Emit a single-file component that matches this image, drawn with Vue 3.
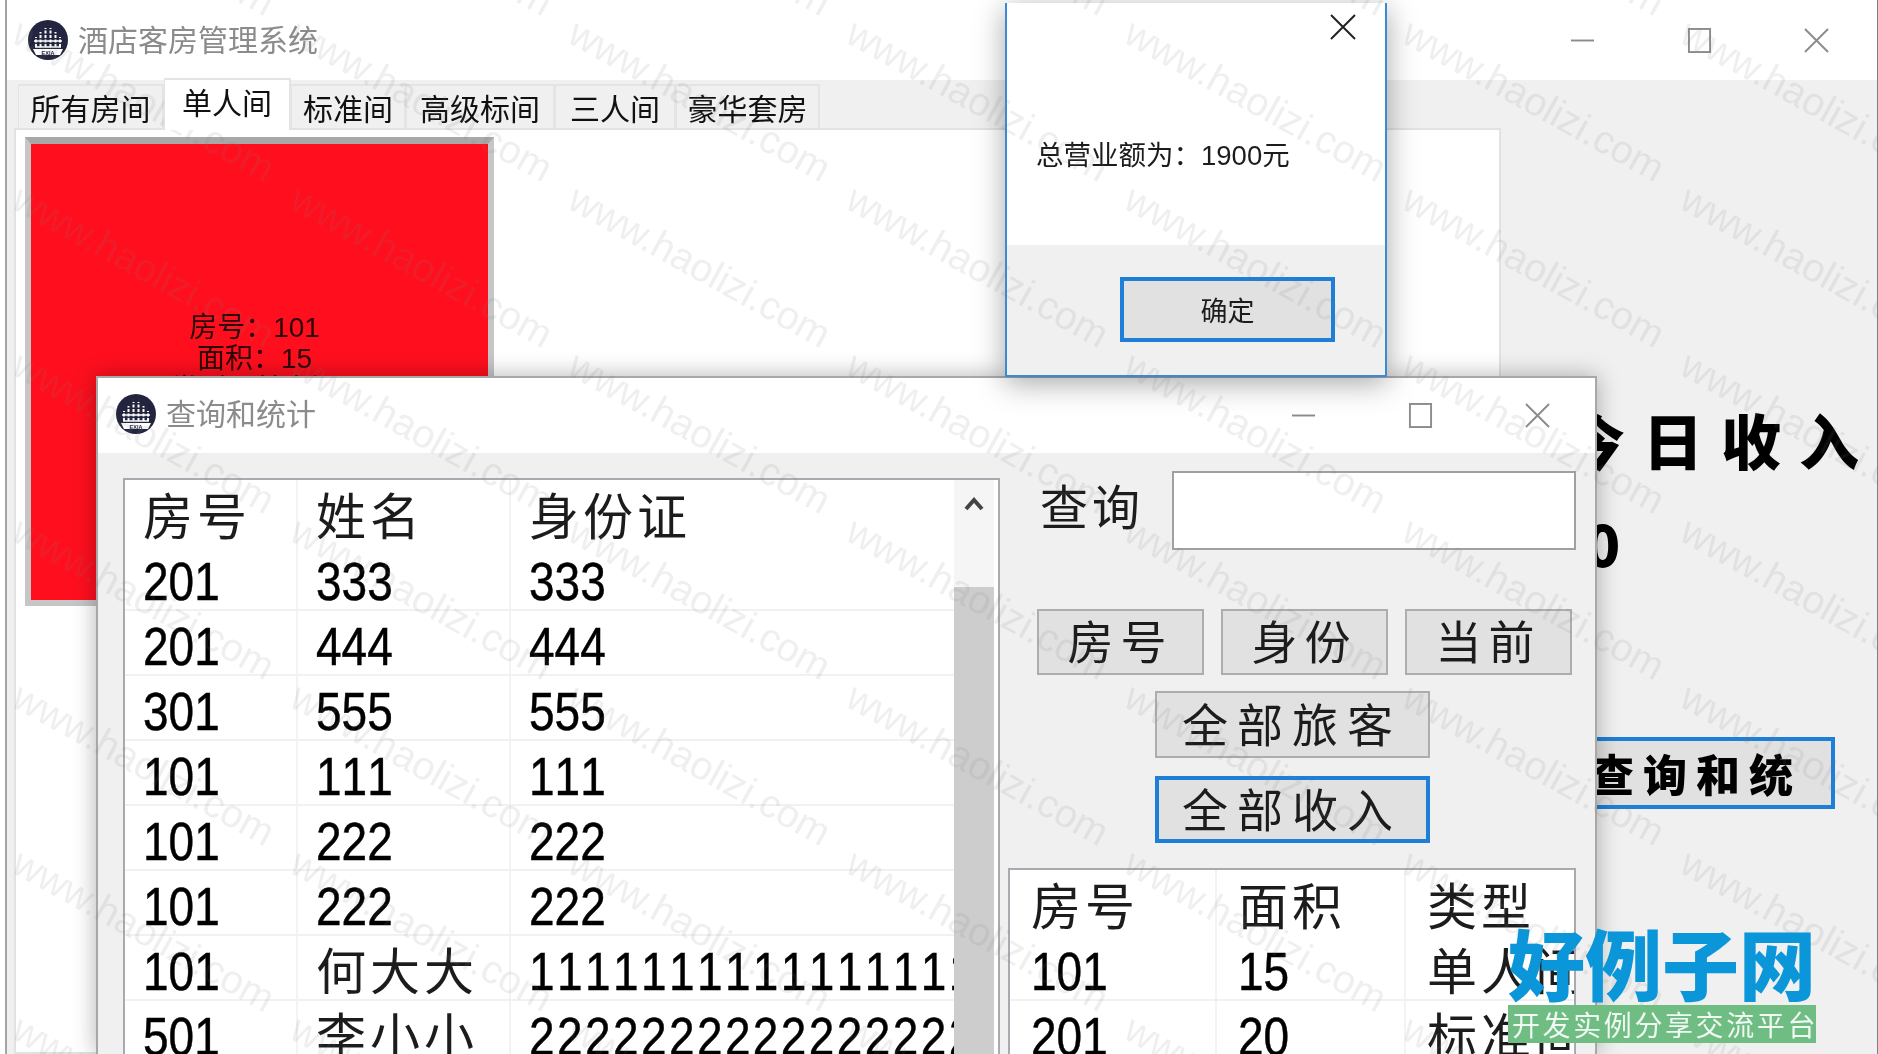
<template>
  <div class="desk">
    <svg class="defs" width="0" height="0">
      <symbol id="app-logo" viewBox="0 0 40 40">
        <circle cx="20" cy="20" r="20" fill="#23253f" />
        <g stroke="#fff" stroke-width="2" stroke-dasharray="3 1.5">
          <path d="M8 27V17M12.500 27V12M17.500 27V8M22.500 27V8M27.500 27V12M32 27V17" />
        </g>
        <path d="M6 21H34M7 27H33" stroke="#fff" stroke-width="1.500" />
        <path d="M5 29H35L32 35H8Z" fill="#fff" />
        <text x="20" y="34.500" text-anchor="middle" class="logo-text">EXIA</text>
      </symbol>
    </svg>

    <!-- 主窗口 -->
    <div class="window main-win">
      <div class="titlebar main-title">
        <svg class="logo"><use href="#app-logo" /></svg>
        <span class="title-text">酒店客房管理系统</span>
        <div class="controls">
          <svg class="ctl" viewBox="0 0 26 26"><path d="M1 13H25" /></svg>
          <svg class="ctl" viewBox="0 0 26 26"><rect x="2" y="1" width="22" height="24" /></svg>
          <svg class="ctl" viewBox="0 0 26 26"><path d="M1 1L25 25M25 1L1 25" /></svg>
        </div>
      </div>
      <div class="main-body">
        <div class="tabs">
          <div class="tab-strip">
            <div
              v-for="t in tabs"
              :key="t.name"
              class="tab"
              :class="{ active: t.name === activeTab }"
              :style="{ width: t.w + 'px' }"
            >{{ t.name }}</div>
          </div>
          <div class="tab-page">
            <div class="room-card">
              <div class="room-red">
                <div>房号：101</div>
                <div>面积：15</div>
                <div>类型：单人间</div>
              </div>
            </div>
          </div>
        </div>
        <div class="side">
          <div class="income-label">今日收入</div>
          <div class="income-value">0</div>
          <button class="stat-btn">查询和统</button>
        </div>
      </div>
    </div>

    <!-- 查询和统计 -->
    <div class="window query-win">
      <div class="titlebar query-title">
        <svg class="logo"><use href="#app-logo" /></svg>
        <span class="title-text">查询和统计</span>
        <div class="controls">
          <svg class="ctl" viewBox="0 0 26 26"><path d="M1 13H25" /></svg>
          <svg class="ctl" viewBox="0 0 26 26"><rect x="2" y="1" width="22" height="24" /></svg>
          <svg class="ctl" viewBox="0 0 26 26"><path d="M1 1L25 25M25 1L1 25" /></svg>
        </div>
      </div>
      <div class="query-body">
        <div class="list guests">
          <div class="list-rows">
            <div class="list-row list-head">
              <div v-for="h in guestHead" :key="h" class="cell head-cell">{{ h }}</div>
            </div>
            <div v-for="(r, i) in guests" :key="i" class="list-row">
              <div v-for="(c, j) in r" :key="j" class="cell">
                <span :class="cellClass(c)">{{ c }}</span>
              </div>
            </div>
          </div>
          <div class="scrollbar">
            <div class="scroll-track">
              <svg class="chevron" viewBox="0 0 20 14"><path d="M2 12L10 3L18 12" /></svg>
            </div>
            <div class="scroll-thumb"></div>
          </div>
        </div>

        <div class="query-side">
          <div class="search-row">
            <span class="search-label">查询</span>
            <input class="search-input" type="text" />
          </div>
          <div class="btn-row">
            <button class="win-btn">房号</button>
            <button class="win-btn">身份</button>
            <button class="win-btn">当前</button>
          </div>
          <button class="win-btn wide">全部旅客</button>
          <button class="win-btn wide focused">全部收入</button>
          <div class="list rooms">
            <div class="list-rows">
              <div class="list-row list-head">
                <div v-for="h in roomHead" :key="h" class="cell head-cell">{{ h }}</div>
              </div>
              <div v-for="(r, i) in rooms" :key="i" class="list-row">
                <div v-for="(c, j) in r" :key="j" class="cell">
                  <span :class="cellClass(c)">{{ c }}</span>
                </div>
              </div>
            </div>
          </div>
        </div>
      </div>
    </div>

    <!-- 总营业额 -->
    <div class="window msg-win">
      <div class="msg-top">
        <svg class="msg-close" viewBox="0 0 26 26"><path d="M1 1L25 25M25 1L1 25" /></svg>
        <div class="msg-text">总营业额为：1900元</div>
      </div>
      <div class="msg-bottom">
        <button class="msg-btn">确定</button>
      </div>
    </div>

    <!-- 水印 -->
    <div class="watermarks">
      <span
        v-for="m in marks"
        :key="m.id"
        class="mark"
        :style="{ left: m.x + 'px', top: m.y + 'px' }"
      >www.haolizi.com</span>
    </div>

    <div class="brand">
      <div class="brand-name">好例子网</div>
      <div class="brand-sub">开发实例分享交流平台</div>
    </div>
  </div>
</template>

<script setup>
const activeTab = '单人间'

const tabs = [
  { name: '所有房间', w: 146 },
  { name: '单人间', w: 127 },
  { name: '标准间', w: 115 },
  { name: '高级标间', w: 149 },
  { name: '三人间', w: 121 },
  { name: '豪华套房', w: 144 }
]

const guestHead = ['房号', '姓名', '身份证']
const guests = [
  ['201', '333', '333'],
  ['201', '444', '444'],
  ['301', '555', '555'],
  ['101', '111', '111'],
  ['101', '222', '222'],
  ['101', '222', '222'],
  ['101', '何大大', '1111111111111111111'],
  ['501', '李小小', '2222222222222222222']
]

const roomHead = ['房号', '面积', '类型']
const rooms = [
  ['101', '15', '单人间'],
  ['201', '20', '标准间']
]

const cellClass = (s) => {
  if (!/^\d+$/.test(s)) return 'cjk'
  return s.length > 6 ? 'num long' : 'num'
}

// 水印按固定间距铺满整个画面
const marks = []
for (let j = -1; j < 7; j++) {
  for (let i = -1; i < 7; i++) {
    marks.push({ id: i + '_' + j, x: 16 + 278 * i, y: 10 + 166 * j })
  }
}
</script>

<style>
html, body {
  margin: 0;
  background: #f0f0f0;
}
</style>

<style scoped>
.desk {
  position: relative;
  width: 1878px;
  height: 1054px;
  overflow: hidden;
  background: #fff;
  font-family: "Noto Sans CJK SC", "Liberation Sans", sans-serif;
  color: #111;
  filter: blur(0.7px);
}
.defs {
  position: absolute;
}
.logo-text {
  font-family: "Liberation Sans", sans-serif;
  font-size: 5.500px;
  font-weight: 700;
  fill: #23253f;
}
.window {
  position: absolute;
  box-sizing: border-box;
}
.main-win {
  left: 5px;
  top: 0;
  width: 1873px;
  height: 1054px;
  display: flex;
  flex-direction: column;
  background: #f0f0f0;
  border-left: 2px solid #a4a4a4;
  border-right: 1px solid #808080;
}
.titlebar {
  display: flex;
  align-items: center;
  background: #fff;
  flex: none;
}
.main-title {
  height: 80px;
  padding-left: 21px;
}
.logo {
  width: 40px;
  height: 40px;
  flex: none;
}
.title-text {
  margin: -4px 0 0 10px;
  font-size: 30px;
  color: #8b8b8b;
  white-space: nowrap;
}
.controls {
  margin-left: auto;
  display: flex;
  align-items: center;
}
.main-title .controls {
  gap: 92px;
  padding-right: 48px;
}
.ctl {
  width: 25px;
  height: 25px;
  fill: none;
  stroke: #8c8c8c;
  stroke-width: 2;
}
.main-body {
  flex: 1;
  display: flex;
  min-height: 0;
}
.tabs {
  width: 1487px;
  margin-left: 7px;
  display: flex;
  flex-direction: column;
}
.tab-strip {
  display: flex;
  align-items: flex-end;
  height: 50px;
  padding-left: 4px;
  box-sizing: border-box;
  border-bottom: 2px solid #e2e2e2;
}
.tab {
  box-sizing: border-box;
  height: 46px;
  margin-bottom: -2px;
  border: 2px solid #e4e4e4;
  border-left-width: 1px;
  border-bottom: none;
  text-align: center;
  font-size: 30px;
  line-height: 42px;
  color: #111;
}
.tab.active {
  height: 52px;
  background: #fff;
  line-height: 42px;
  position: relative;
  z-index: 1;
}
.tab-page {
  flex: 1;
  background: #fff;
  border: 2px solid #e2e2e2;
  border-top: none;
  padding: 7px 9px;
}
.room-card {
  width: 469px;
  height: 469px;
  box-sizing: border-box;
  border: 6px solid #c6c6c6;
  border-top: 7px solid #a8a8a8;
}
.room-red {
  height: 100%;
  background: #ff0f1e;
  padding-top: 168px;
  padding-right: 10px;
  box-sizing: border-box;
  text-align: center;
  font-size: 28px;
  line-height: 31px;
  color: #2a0407;
  font-family: "Liberation Sans", "Noto Sans CJK SC", sans-serif;
}
.side {
  flex: 1;
  padding: 324px 0 0 62px;
  display: flex;
  flex-direction: column;
  align-items: flex-start;
}
.income-label {
  margin-left: 2px;
  font-size: 60px;
  line-height: 70px;
  letter-spacing: 18px;
  font-weight: 900;
  color: #000;
  white-space: nowrap;
}
.income-value {
  margin: 33px 0 0 22px;
  font-size: 58px;
  line-height: 70px;
  font-weight: 900;
  color: #000;
}
.stat-btn {
  margin-top: 160px;
  width: 272px;
  height: 72px;
  box-sizing: border-box;
  border: 4px solid #1e7fd8;
  background: #e1e1e1;
  padding: 0 6px 12px 0;
  font-family: inherit;
  font-size: 44px;
  font-weight: 900;
  letter-spacing: 9px;
  color: #000;
  white-space: nowrap;
}

.query-win {
  left: 96px;
  top: 376px;
  width: 1501px;
  height: 678px;
  display: flex;
  flex-direction: column;
  background: #f0f0f0;
  border: 2px solid #a8a8a8;
  border-bottom: none;
  box-shadow: 0 0 22px rgba(0, 0, 0, 0.3);
}
.query-title {
  height: 75px;
  padding: 0 0 4px 18px;
  box-sizing: border-box;
}
.query-title .controls {
  gap: 92px;
  padding-right: 45px;
  margin-top: 4px;
}
.query-body {
  flex: 1;
  display: flex;
  min-height: 0;
  padding: 25px 0 0 25px;
  gap: 8px;
}
.list {
  box-sizing: border-box;
  background: #fff;
  border: 2px solid #a9a9b0;
  border-bottom: none;
  display: flex;
  overflow: hidden;
}
.guests {
  width: 877px;
  height: 100%;
}
.list-rows {
  flex: 1;
  min-width: 0;
}
.list-row {
  display: grid;
  height: 65px;
  box-sizing: border-box;
  border-bottom: 2px solid #f1f1f1;
  white-space: nowrap;
  overflow: hidden;
}
.guests .list-row {
  grid-template-columns: 173px 213px 1fr;
}
.rooms .list-row {
  grid-template-columns: 207px 189px 1fr;
}
.list-head {
  height: 66px;
  border-bottom: none;
}
.cell {
  box-sizing: border-box;
  padding-left: 18px;
  border-right: 2px solid #f3f3f3;
  overflow: hidden;
  display: flex;
  align-items: center;
}
.cell:last-child {
  border-right: none;
}
.head-cell,
.cjk {
  font-size: 50px;
  letter-spacing: 4px;
  color: #1c1c1c;
}
.num {
  display: inline-block;
  font-family: "Liberation Sans", sans-serif;
  font-size: 46px;
  font-kerning: none;
  transform: translateY(4px) scaleY(1.15);
  color: #000;
  -webkit-text-stroke: 0.4px #000;
}
.long {
  letter-spacing: 2.400px;
}
.scrollbar {
  flex: none;
  width: 40px;
  margin-right: 4px;
  display: flex;
  flex-direction: column;
}
.scroll-track {
  height: 107px;
  background: #f5f5f5;
  padding-top: 17px;
  box-sizing: border-box;
  display: flex;
  justify-content: center;
}
.chevron {
  width: 20px;
  height: 14px;
  fill: none;
  stroke: #444;
  stroke-width: 4;
}
.scroll-thumb {
  flex: 1;
  background: #cdcdcd;
}
.query-side {
  width: 568px;
  display: flex;
  flex-direction: column;
  align-items: center;
  margin-top: -7px;
}
.search-row {
  align-self: stretch;
  display: flex;
  align-items: center;
  justify-content: space-between;
  height: 79px;
  padding-left: 32px;
}
.search-label {
  font-size: 48px;
  letter-spacing: 4px;
  color: #1c1c1c;
  margin-top: -14px;
}
.search-input {
  width: 404px;
  height: 79px;
  box-sizing: border-box;
  border: 2px solid #a0a0a0;
  background: #fff;
  padding: 0;
}
.btn-row {
  align-self: stretch;
  display: flex;
  gap: 17px;
  margin-top: 59px;
  padding-left: 29px;
}
.win-btn {
  box-sizing: border-box;
  width: 167px;
  height: 66px;
  padding: 0 0 6px;
  border: 2px solid #adadad;
  background: #e1e1e1;
  font-family: inherit;
  font-size: 46px;
  letter-spacing: 7px;
  line-height: 1;
  color: #1c1c1c;
  white-space: nowrap;
}
.wide {
  width: 275px;
  height: 67px;
  margin-top: 16px;
  letter-spacing: 9px;
}
.focused {
  margin-top: 18px;
  border: 4px solid #1e7fd8;
}
.rooms {
  align-self: stretch;
  margin-top: 25px;
  flex: 1;
}
.rooms .cell {
  padding-left: 21px;
}

.msg-win {
  left: 1005px;
  top: 3px;
  width: 382px;
  height: 374px;
  display: flex;
  flex-direction: column;
  background: #f0f0f0;
  border: 2px solid #3a8ad6;
  border-top: none;
  box-shadow: 0 6px 28px rgba(0, 0, 0, 0.35);
}
.msg-top {
  height: 242px;
  background: #fff;
  display: flex;
  flex-direction: column;
}
.msg-close {
  flex: none;
  width: 26px;
  height: 26px;
  margin: 11px 0 0 323px;
  fill: none;
  stroke: #222;
  stroke-width: 2;
}
.msg-text {
  margin: 99px 0 0 29px;
  font-size: 27.500px;
  line-height: 34px;
  color: #1c1c1c;
  font-family: "Liberation Sans", "Noto Sans CJK SC", sans-serif;
  white-space: nowrap;
}
.msg-bottom {
  flex: 1;
  display: flex;
  justify-content: flex-end;
  padding: 32px 50px 0 0;
}
.msg-btn {
  box-sizing: border-box;
  width: 215px;
  height: 65px;
  border: 4px solid #1e7fd8;
  background: #e1e1e1;
  padding: 0;
  font-family: inherit;
  font-size: 27px;
  color: #1c1c1c;
}

.watermarks {
  position: absolute;
  inset: 0;
  pointer-events: none;
}
.mark {
  position: absolute;
  font-family: "Liberation Sans", sans-serif;
  font-size: 39.500px;
  line-height: 1;
  color: rgba(120, 120, 120, 0.12);
  white-space: nowrap;
  transform: rotate(29deg);
  transform-origin: 0 50%;
}

.brand {
  position: absolute;
  left: 1508px;
  top: 922px;
  width: 308px;
}
.brand-name {
  font-size: 77px;
  line-height: 80px;
  font-weight: 900;
  color: #0a96d8;
  white-space: nowrap;
}
.brand-sub {
  margin-top: 3px;
  height: 38px;
  background: #6fbd83;
  color: rgba(255, 255, 255, 0.9);
  font-size: 28px;
  line-height: 38px;
  letter-spacing: 2.600px;
  padding-left: 4px;
  white-space: nowrap;
  overflow: hidden;
}
</style>
